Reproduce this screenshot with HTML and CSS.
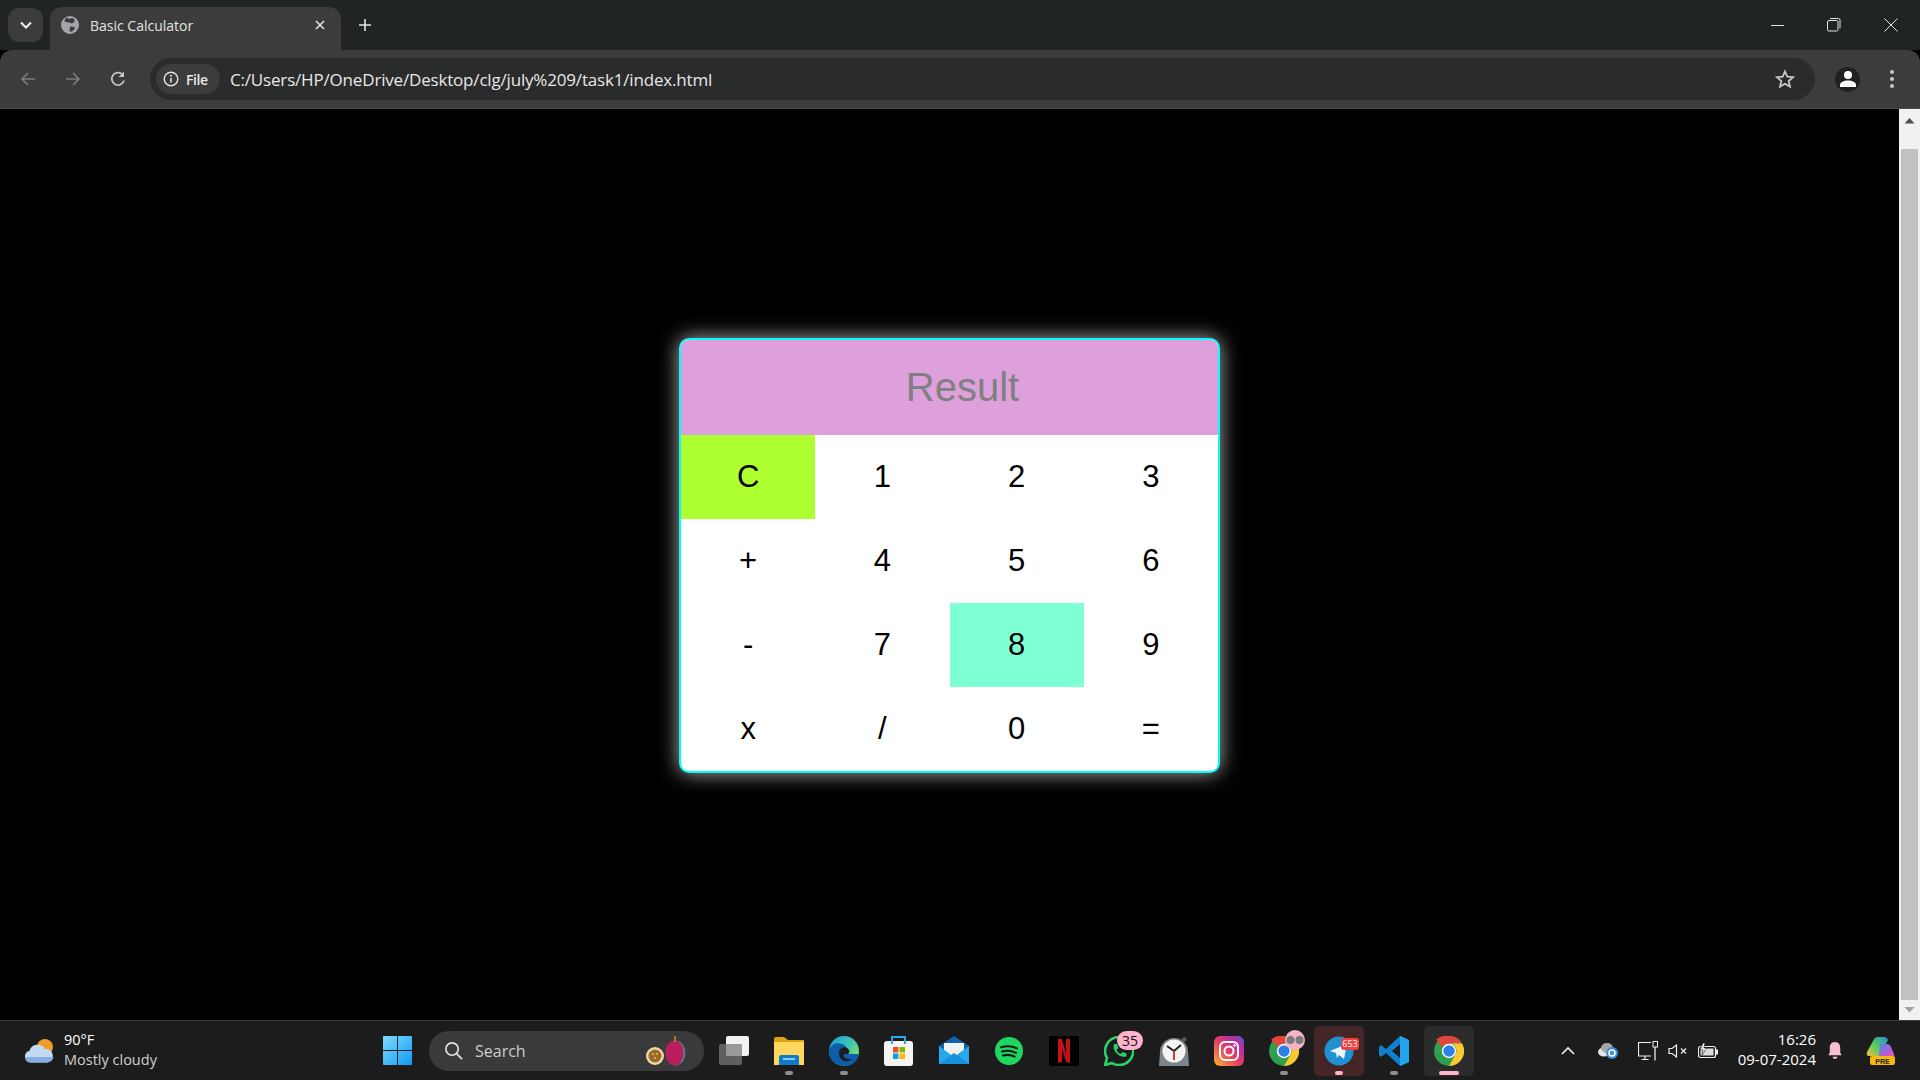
FILE: index.html
```html
<!DOCTYPE html>
<html lang="en">
<head>
<meta charset="utf-8">
<title>Basic Calculator</title>
<link rel="stylesheet" href="styles.css">
</head>
<body>
<div class="tabstrip">
  <div class="tabsearch"><svg width="12" height="8" viewBox="0 0 12 8"><path d="M1 1.500l5 5 5-5" fill="none" stroke="#f0f0f0" stroke-width="2"/></svg></div>
  <div class="tab">
    <svg class="favicon" width="18" height="18" viewBox="0 0 18 18"><circle cx="9" cy="9" r="9" fill="#a3a7ab"/><path d="M6 1.500c1.500 2 3.500 1 5.500.5 1.500 1 2.500 2 2 3.500-1.500 2-3.500 2.500-4 1.500C8 6 5 6.500 3.500 5.500 3.500 4 4.500 2.500 6 1.500zM9.500 10.500c2 0 4 .5 4.500 1-.5 2-2 3.500-4.500 4.500C8 14.500 8.500 12 9.500 10.500z" fill="#3c3c3c"/></svg>
    <span class="tabtitle">Basic Calculator</span>
    <svg class="tabclose" width="10" height="10" viewBox="0 0 10 10"><path d="M1 1l8 8M9 1l-8 8" stroke="#e3e3e3" stroke-width="1.600"/></svg>
  </div>
  <svg class="newtab" width="14" height="14" viewBox="0 0 14 14"><path d="M7 1v12M1 7h12" stroke="#e3e3e3" stroke-width="1.600"/></svg>
  <div class="winctl">
    <svg width="14" height="14" viewBox="0 0 14 14"><path d="M0 7.500h13" stroke="#e3e3e3"/></svg>
    <svg width="14" height="14" viewBox="0 0 14 14"><rect x=".5" y="2.500" width="10.500" height="10.500" rx="1.500" fill="none" stroke="#e3e3e3"/><path d="M3 .5h8.500a1.500 1.500 0 0 1 1.500 1.500v8.500" fill="none" stroke="#e3e3e3"/></svg>
    <svg width="14" height="14" viewBox="0 0 14 14"><path d="M.5.500l13 13M13.500.500l-13 13" stroke="#e3e3e3"/></svg>
  </div>
</div>
<div class="toolbar">
  <div class="nav">
    <svg width="16" height="16" viewBox="0 0 16 16"><path d="M15 8H2M8 2L2 8l6 6" fill="none" stroke="#7b7d7e" stroke-width="1.600"/></svg>
    <svg width="16" height="16" viewBox="0 0 16 16"><path d="M1 8h13M8 2l6 6-6 6" fill="none" stroke="#7b7d7e" stroke-width="1.600"/></svg>
    <svg width="16" height="16" viewBox="0 0 16 16"><path d="M14 9.500A6.200 6.200 0 1 1 12.300 3.300" fill="none" stroke="#c7c7c7" stroke-width="1.700"/><path d="M14 .5v5.500H8.500z" fill="#c7c7c7"/></svg>
  </div>
  <div class="omnibox">
    <div class="chip">
      <svg width="16" height="16" viewBox="0 0 16 16"><circle cx="8" cy="8" r="6.800" fill="none" stroke="#e3e3e3" stroke-width="1.400"/><path d="M8 7v4.500" stroke="#e3e3e3" stroke-width="1.600"/><circle cx="8" cy="4.800" r="1" fill="#e3e3e3"/></svg>
      <span>File</span>
    </div>
    <span class="url">C:/Users/HP/OneDrive/Desktop/clg/july%209/task1/index.html</span>
    <svg class="star" width="20" height="20" viewBox="0 0 20 20"><path d="M10 2.500l2.300 5.200 5.700.5-4.300 3.800 1.300 5.600L10 14.700l-5 2.900 1.300-5.600L2 8.200l5.700-.5z" fill="none" stroke="#c7c7c7" stroke-width="1.800"/></svg>
  </div>
  <div class="avatar"><svg width="16" height="16" viewBox="0 0 16 16"><circle cx="8" cy="4" r="4" fill="#fff"/><path d="M0 16v-2c0-3 4-4.500 8-4.500s8 1.500 8 4.500v2z" fill="#fff"/></svg></div>
  <div class="kebab"><i></i><i></i><i></i></div>
</div>
<div class="viewport">
  <main class="page">
    <div class="calc">
      <div class="result">Result</div>
      <div class="keys">
        <div class="key key-clear">C</div><div class="key">1</div><div class="key">2</div><div class="key">3</div>
        <div class="key">+</div><div class="key">4</div><div class="key">5</div><div class="key">6</div>
        <div class="key">-</div><div class="key">7</div><div class="key key-hover">8</div><div class="key">9</div>
        <div class="key">x</div><div class="key">/</div><div class="key">0</div><div class="key">=</div>
      </div>
    </div>
  </main>
  <div class="scrollbar">
    <svg class="arrow arrow-up" width="21" height="24" viewBox="0 0 21 24"><path d="M5.500 14.500l5-5.500 5 5.500z" fill="#505050"/></svg>
    <div class="track"><div class="thumb"></div></div>
    <svg class="arrow arrow-down" width="21" height="20" viewBox="0 0 21 20"><path d="M5.500 7l5 5.500 5-5.500z" fill="#a0a0a0"/></svg>
  </div>
</div>
<footer class="taskbar">
  <div class="weather">
    <svg width="30" height="25" viewBox="0 0 30 25"><circle cx="21" cy="9" r="8" fill="#ee9a2c"/><path d="M7 24.500a6 6 0 0 1-1.500-11.800A8.500 8.500 0 0 1 21 11a6.800 6.800 0 0 1 2 13.500z" fill="#c4daf4"/><path d="M1 19a6 6 0 0 0 6 5.500h16a6.800 6.800 0 0 0 6.500-5.500z" fill="#86aee2"/></svg>
    <div class="weathertext"><span>90°F</span><span class="muted">Mostly cloudy</span></div>
  </div>
  <div class="apps">
    <svg class="start" width="29" height="29" viewBox="0 0 30 30"><defs><linearGradient id="win" x1="0" y1="0" x2="1" y2="1"><stop offset="0" stop-color="#7fdcff"/><stop offset="1" stop-color="#0f9bf5"/></linearGradient></defs><path d="M1 0h13.500v14.500H0V1a1 1 0 0 1 1-1zM15.500 0H29a1 1 0 0 1 1 1v13.500H15.500zM0 15.500h14.500V30H1a1 1 0 0 1-1-1zM15.500 15.500H30V29a1 1 0 0 1-1 1H15.500z" fill="url(#win)"/></svg>
    <div class="search">
      <svg width="19" height="19" viewBox="0 0 20 20"><circle cx="8.500" cy="8.500" r="6.500" fill="none" stroke="#e0e0e0" stroke-width="1.800"/><path d="M13 13l6 6" stroke="#e0e0e0" stroke-width="1.800"/></svg>
      <span class="searchtext">Search</span>
      <svg class="fruit" width="40" height="30" viewBox="0 0 40 30"><ellipse cx="29.500" cy="17" rx="10" ry="12.500" fill="#5e7c90"/><ellipse cx="28.500" cy="17" rx="9" ry="12.500" fill="#b81e5e"/><path d="M29 0v6" stroke="#b5702a" stroke-width="2"/><circle cx="9" cy="20" r="9" fill="#f0d9a0"/><circle cx="9" cy="20" r="6.500" fill="#9a6a30"/><circle cx="7" cy="18" r="1" fill="#e8c040"/><circle cx="11" cy="18" r="1" fill="#e8c040"/><circle cx="9" cy="22" r="1" fill="#e8c040"/></svg>
    </div>
    <div class="app"><svg width="30" height="30" viewBox="0 0 30 30"><rect x="0" y="8" width="23" height="21" rx="2" fill="#5f5f5f"/><rect x="7" y="0" width="23" height="20" rx="2" fill="#f2f2f2"/><rect x="7" y="8" width="16" height="12" fill="#9a9a9a"/></svg></div>
    <div class="app dot"><svg width="30" height="30" viewBox="0 0 30 30"><path d="M0 3a2 2 0 0 1 2-2h8l4 3h16v25H0z" fill="#e0a410"/><path d="M0 6h30v23H0z" fill="#ffd75e"/><path d="M5 21a2 2 0 0 1 2-2h16a2 2 0 0 1 2 2v8H5z" fill="#0f7ac9"/><rect x="9" y="22" width="12" height="2" fill="#8cc8f0"/></svg></div>
    <div class="app dot"><svg width="30" height="30" viewBox="0 0 30 30"><defs><linearGradient id="edge" x1="0" y1="0" x2="1" y2=".7"><stop offset="0" stop-color="#1a9de0"/><stop offset=".6" stop-color="#3ec6b0"/><stop offset="1" stop-color="#8be060"/></linearGradient></defs><circle cx="15" cy="15" r="15" fill="url(#edge)"/><path d="M0 15C1 8 8 6 13 8c5 2 7 6 5 10h12c-1 6-6 12-13 12C6 30 0 24 0 15z" fill="#0c5ea8"/><path d="M10 17c0-4 4-7 8-5 3 2 3 5 1 6h-4c-2 3 3 6 8 5-3 3-8 3-11 0-1-1-2-3-2-6z" fill="#1c1c1c"/></svg></div>
    <div class="app"><svg width="30" height="30" viewBox="0 0 30 30"><rect x="0" y="5" width="29" height="25" rx="3" fill="#f4f4f4"/><path d="M8 8V1h13v7" fill="none" stroke="#27a8e8" stroke-width="2"/><rect x="9" y="11" width="5.500" height="5.500" fill="#f25022"/><rect x="15.500" y="11" width="5.500" height="5.500" fill="#7fba00"/><rect x="9" y="17.500" width="5.500" height="5.500" fill="#00a4ef"/><rect x="15.500" y="17.500" width="5.500" height="5.500" fill="#ffb900"/></svg></div>
    <div class="app"><svg width="30" height="30" viewBox="0 0 30 30"><path d="M0 10L15 0l15 10v18H0z" fill="#0f62ad"/><path d="M5 7h20v13H5z" fill="#f2f2f2"/><path d="M0 10l15 11 15-11v18H0z" fill="#2aa8ec"/><path d="M0 28l15-11 15 11z" fill="#1a8fdc"/></svg></div>
    <div class="app"><svg width="28" height="28" viewBox="0 0 30 30"><circle cx="15" cy="15" r="15" fill="#1ed760"/><path d="M6.500 11c6-1.800 12-1.500 17 1.200M7.500 15.500c5-1.400 10.500-1 15 1.500M8.500 19.800c4.500-1.100 9-.8 12.500 1.300" fill="none" stroke="#1a1a1a" stroke-width="2.200" stroke-linecap="round"/></svg></div>
    <div class="app"><svg width="30" height="30" viewBox="0 0 30 30"><rect width="30" height="30" fill="#000"/><path d="M9 3h4l4 15V3h4v24l-4-1-4-14v14l-4 1z" fill="#c5101a"/></svg></div>
    <div class="app"><svg width="30" height="30" viewBox="0 0 30 30"><path d="M15 1a14 14 0 0 0-12 21L1 29l7-2A14 14 0 1 0 15 1z" fill="none" stroke="#25d366" stroke-width="2.600"/><path d="M10 8l3 0 1.500 4-2 2c1 2 2 3 4 4l2-2 4 1.500v3c-7 2-15-6-12.500-12.500z" fill="#25d366"/></svg><span class="badge badge-pink">35</span></div>
    <div class="app"><svg width="30" height="30" viewBox="0 0 30 30"><path d="M22 3l4-2 2 3-3 2z" fill="#5a5a5a"/><path d="M0 30l1-14a14 14 0 0 1 28 0l1 14z" fill="#7c858c"/><circle cx="15" cy="15" r="11.500" fill="#f4f4f4"/><path d="M15 15l-7-5M15 15l7-6" stroke="#222" stroke-width="2"/><path d="M15 15v9" stroke="#d83b2a" stroke-width="2"/></svg></div>
    <div class="app"><svg width="30" height="30" viewBox="0 0 30 30"><defs><linearGradient id="insta" x1="0" y1="1" x2="1" y2="0"><stop offset="0" stop-color="#fdb72c"/><stop offset=".45" stop-color="#e9405c"/><stop offset=".75" stop-color="#b82fa0"/><stop offset="1" stop-color="#5a55d4"/></linearGradient></defs><rect width="30" height="30" rx="6" fill="url(#insta)"/><rect x="6" y="6" width="18" height="18" rx="5" fill="none" stroke="#fff" stroke-width="2"/><circle cx="15" cy="15" r="4.500" fill="none" stroke="#fff" stroke-width="2"/><circle cx="20.500" cy="9.500" r="1.200" fill="#fff"/></svg></div>
    <div class="app dot"><svg width="30" height="30" viewBox="0 0 30 30"><use href="#chrome-mark"/></svg><span class="badge badge-specs"><svg width="18" height="10" viewBox="0 0 18 10"><circle cx="4.500" cy="5" r="4" fill="#7a7a7a"/><circle cx="13.500" cy="5" r="4" fill="#7a7a7a"/></svg></span></div>
    <div class="app dot dot-pink app-alert"><svg width="30" height="30" viewBox="0 0 30 30"><circle cx="15" cy="15" r="14.500" fill="#1f92d1"/><path d="M6 15l17-7-3 15-5-4-2 3-1-5z" fill="#eaf6fc"/></svg><span class="badge badge-red">653</span></div>
    <div class="app dot"><svg width="30" height="30" viewBox="0 0 30 30"><path d="M21 0l9 4v22l-9 4L7 17l-5 4-2-2v-8l2-2 5 4zm0 8l-8 7 8 7z" fill="#0e80cc"/><path d="M21 0l9 4v22l-9 4z" fill="#23a4ef"/></svg></div>
    <div class="app app-active dot dot-pink dot-wide"><svg width="30" height="30" viewBox="0 0 30 30"><use href="#chrome-mark"/></svg></div>
  </div>
  <div class="tray">
    <svg class="tray-chevron" width="14" height="10" viewBox="0 0 14 10"><path d="M1 8l6-6 6 6" fill="none" stroke="#eee" stroke-width="1.600"/></svg>
    <svg class="tray-cloud" width="20" height="16" viewBox="0 0 20 16"><ellipse cx="6" cy="9" rx="6" ry="4.500" fill="#e6e6e6"/><ellipse cx="9" cy="5" rx="6" ry="5" fill="#a8a8a8"/><circle cx="14" cy="10" r="6" fill="#3a8fe0"/><circle cx="14" cy="10" r="3" fill="none" stroke="#fff" stroke-width="1.500"/></svg>
    <svg class="tray-monitor" width="20" height="20" viewBox="0 0 20 20"><path d="M13 1.500H.5V15H13M7 15v3.500M3.500 18.500h7" fill="none" stroke="#eee" stroke-width="1.200"/><rect x="15" y=".5" width="4.500" height="5.500" fill="none" stroke="#eee"/><path d="M17 6v13.500" stroke="#eee" stroke-width="1.300"/></svg>
    <svg class="tray-sound" width="20" height="14" viewBox="0 0 20 14"><path d="M1 4.500h3L8.500 1v12L4 9.500H1z" fill="none" stroke="#eee" stroke-width="1.200"/><path d="M13 4.500l5 5M18 4.500l-5 5" stroke="#eee" stroke-width="1.200"/></svg>
    <svg class="tray-battery" width="20" height="16" viewBox="0 0 20 16"><rect x=".5" y="3.500" width="17" height="11" rx="2" fill="none" stroke="#eee" stroke-width="1.200"/><rect x="2.500" y="5.500" width="13" height="7" fill="#ddd"/><rect x="18" y="6.500" width="2" height="5" fill="#eee"/><path d="M5 0L2 7h3l-1 5 5-7H6l1-5z" fill="#eee" stroke="#1c1c1c" stroke-width=".6"/></svg>
    <div class="clock"><span>16:26</span><span>09-07-2024</span></div>
    <svg class="tray-bell" width="16" height="19" viewBox="0 0 16 20"><path d="M8 1c-4 0-5.500 3-5.500 6v5L1 15h14l-1.500-3V7C13.500 4 12 1 8 1zM5.500 16.500a2.500 2.500 0 0 0 5 0z" fill="#f6c0cf"/></svg>
    <svg class="tray-copilot" width="29" height="28" viewBox="0 0 29 28"><defs><linearGradient id="cop" x1="0" y1="1" x2="1" y2="0"><stop offset="0" stop-color="#f3c33c"/><stop offset=".5" stop-color="#4fc860"/><stop offset="1" stop-color="#2f88e0"/></linearGradient><linearGradient id="cop2" x1="0" y1="0" x2="1" y2="1"><stop offset="0" stop-color="#3f8ee8"/><stop offset=".6" stop-color="#b75ad8"/><stop offset="1" stop-color="#ee5cb0"/></linearGradient></defs><path d="M8 2Q9 0 12 0H18Q21 0 22 3L14 19H3Q0 19 1 15z" fill="url(#cop)"/><path d="M14 7H21Q24 7 25 10L28 17Q29 20 26 20H13z" fill="url(#cop2)"/><rect x="4" y="19" width="25" height="9" rx="2" fill="#f7b90f"/><text x="16.500" y="26.500" class="pre">PRE</text></svg>
  </div>
</footer>
<svg class="defs" width="0" height="0" aria-hidden="true"><defs><g id="chrome-mark"><circle cx="15" cy="15" r="15" fill="#2f9e4f"/><path d="M15 0a15 15 0 0 1 13 7.500H15a7.500 7.500 0 0 0-6.500 3.750L2 3.800A15 15 0 0 1 15 0z" fill="#e2463a"/><path d="M28 7.500A15 15 0 0 1 15 30l6.500-11.250A7.500 7.500 0 0 0 15 7.500z" fill="#fbc82f"/><circle cx="15" cy="15" r="7.200" fill="#fff"/><circle cx="15" cy="15" r="5.700" fill="#2f7fe8"/></g></defs></svg>
</body>
</html>
```
FILE: styles.css
```css
* { box-sizing: border-box; }
html, body { margin: 0; height: 100%; overflow: hidden; }
body {
  display: flex;
  flex-direction: column;
  width: 1920px;
  height: 1080px;
  background: #000;
  font-family: "Liberation Sans", Arial, sans-serif;
}
svg { display: block; flex: none; }
.defs { position: absolute; }

.tabstrip {
  height: 50px;
  background: #202424;
  display: flex;
  align-items: flex-start;
  padding: 7px 0 0 8px;
  color: #e3e3e3;
  font-family: "Open Sans", sans-serif;
}
.tabsearch {
  width: 35px;
  height: 34px;
  margin-top: 1px;
  border-radius: 11px;
  background: #3c3c3c;
  display: flex;
  align-items: center;
  justify-content: center;
}
.tab {
  width: 291px;
  height: 43px;
  margin-left: 7px;
  background: #3c3c3c;
  border-radius: 12px 12px 0 0;
  display: flex;
  align-items: center;
  padding: 0 16px 7px 11px;
}
.tabtitle { margin-left: 11px; font-size: 14px; flex: 1; }
.newtab { margin: 11px 0 0 17px; }
.winctl {
  margin-left: auto;
  display: flex;
  gap: 42px;
  padding: 11px 22px 0 0;
}
.winctl svg:last-child { margin-left: 1px; }

.toolbar {
  height: 59px;
  background: #3c3c3c;
  border-radius: 12px 12px 0 0;
  display: flex;
  align-items: center;
  border-bottom: 1px solid #4a4a4a;
}
.nav { display: flex; gap: 29px; padding-left: 20px; width: 150px; }
.omnibox {
  width: 1665px;
  height: 42px;
  background: #2a2b2b;
  border-radius: 21px;
  display: flex;
  align-items: center;
  padding: 0 20px 0 6px;
  color: #e8e8e8;
}
.chip {
  height: 30px;
  width: 64px;
  background: #3c3c3c;
  border-radius: 15px;
  display: flex;
  align-items: center;
  gap: 7px;
  padding-left: 7px;
  font: 600 14px "Open Sans", sans-serif;
  letter-spacing: -.4px;
}
.url {
  margin-left: 10px;
  font: 17px "Open Sans", sans-serif;
  letter-spacing: -.18px;
  flex: 1;
}
.avatar {
  width: 25px;
  height: 25px;
  margin-left: 20px;
  border-radius: 50%;
  background: #202124;
  display: flex;
  align-items: flex-start;
  justify-content: center;
  padding-top: 4px;
  overflow: hidden;
}
.kebab {
  margin-left: 30px;
  display: flex;
  flex-direction: column;
  gap: 3px;
}
.kebab i { width: 4px; height: 4px; border-radius: 50%; background: #c7c7c7; display: block; }

.viewport { flex: 1; display: flex; min-height: 0; }
.page { flex: 1; display: flex; justify-content: center; padding-top: 229px; }
.calc {
  width: 541px;
  height: 435px;
  border: 2px solid #0ff;
  border-radius: 10px;
  background: #fff;
  overflow: hidden;
  box-shadow: 0 0 20px rgba(255,255,255,.7);
}
.result {
  height: 95px;
  background: plum;
  color: gray;
  font-size: 40px;
  display: flex;
  align-items: center;
  justify-content: center;
  padding-left: 26px;
}
.keys { display: grid; grid-template-columns: repeat(4, 1fr); grid-auto-rows: 84px; }
.key {
  display: flex;
  align-items: center;
  justify-content: center;
  font-size: 31px;
  color: #000;
}
.key-clear { background: #adff2f; }
.key-hover { background: #7fffd4; }

.scrollbar { width: 21px; background: #f1f1f1; display: flex; flex-direction: column; }
.track { flex: 1; padding: 16px 2px 0; display: flex; }
.thumb { flex: 1; background: #c1c1c1; }

.taskbar {
  height: 60px;
  background: #1c1c1c;
  border-top: 1px solid #3a3a3a;
  display: flex;
  align-items: center;
  font-family: "Open Sans", sans-serif;
  color: #fff;
}
.weather { width: 383px; display: flex; align-items: center; gap: 10px; padding-left: 24px; }
.weathertext { display: flex; flex-direction: column; font-size: 14.500px; line-height: 20px; padding-bottom: 2px; }
.muted { color: #d0d0d0; }
.apps { display: flex; align-items: center; gap: 5px; }
.search {
  width: 275px;
  height: 40px;
  margin: 0 0 0 12px;
  background: #3a3a3a;
  border-radius: 20px;
  display: flex;
  align-items: center;
  padding: 0 18px 0 15px;
  color: #ccc;
  font-size: 16px;
}
.searchtext { margin-left: 12px; flex: 1; }
.fruit { margin-left: -20px; }
.app {
  width: 50px;
  height: 50px;
  display: flex;
  align-items: center;
  justify-content: center;
  position: relative;
  border-radius: 5px;
}
.dot::after {
  content: "";
  position: absolute;
  bottom: 1px;
  left: 50%;
  width: 8px;
  height: 4px;
  margin-left: -4px;
  border-radius: 2px;
  background: #8f8f8f;
}
.dot-pink::after { background: #ffb3cc; }
.dot-wide::after { width: 20px; margin-left: -10px; }
.app-alert { background: #442626; }
.app-active { background: #2b2b2b; }
.badge {
  position: absolute;
  display: flex;
  align-items: center;
  justify-content: center;
  color: #111;
}
.badge-pink { top: 5px; right: 1px; width: 26px; height: 19px; border-radius: 10px; background: #ffb3cc; font-size: 14px; }
.badge-specs { top: 4px; right: 4px; width: 20px; height: 20px; border-radius: 50%; background: #f2b3c4; }
.badge-red { top: 12px; right: 5px; width: 18px; height: 12px; border-radius: 3px; background: #ef3f3f; font-size: 9px; color: #fff; }

.tray {
  margin-left: auto;
  display: flex;
  align-items: center;
  padding-right: 25px;
}
.tray-cloud { margin-left: 23px; }
.tray-monitor { margin-left: 20px; }
.tray-sound { margin-left: 10px; }
.tray-battery { margin-left: 10px; }
.clock {
  display: flex;
  flex-direction: column;
  align-items: flex-end;
  font-size: 15px;
  line-height: 20px;
  margin-left: 21px;
  width: 77px;
  padding-bottom: 4px;
  white-space: nowrap;
}
.tray-bell { margin-left: 11px; }
.tray-copilot { margin-left: 23px; }
.pre { font: bold 7px "Liberation Sans", sans-serif; fill: #222; text-anchor: middle; }
```
